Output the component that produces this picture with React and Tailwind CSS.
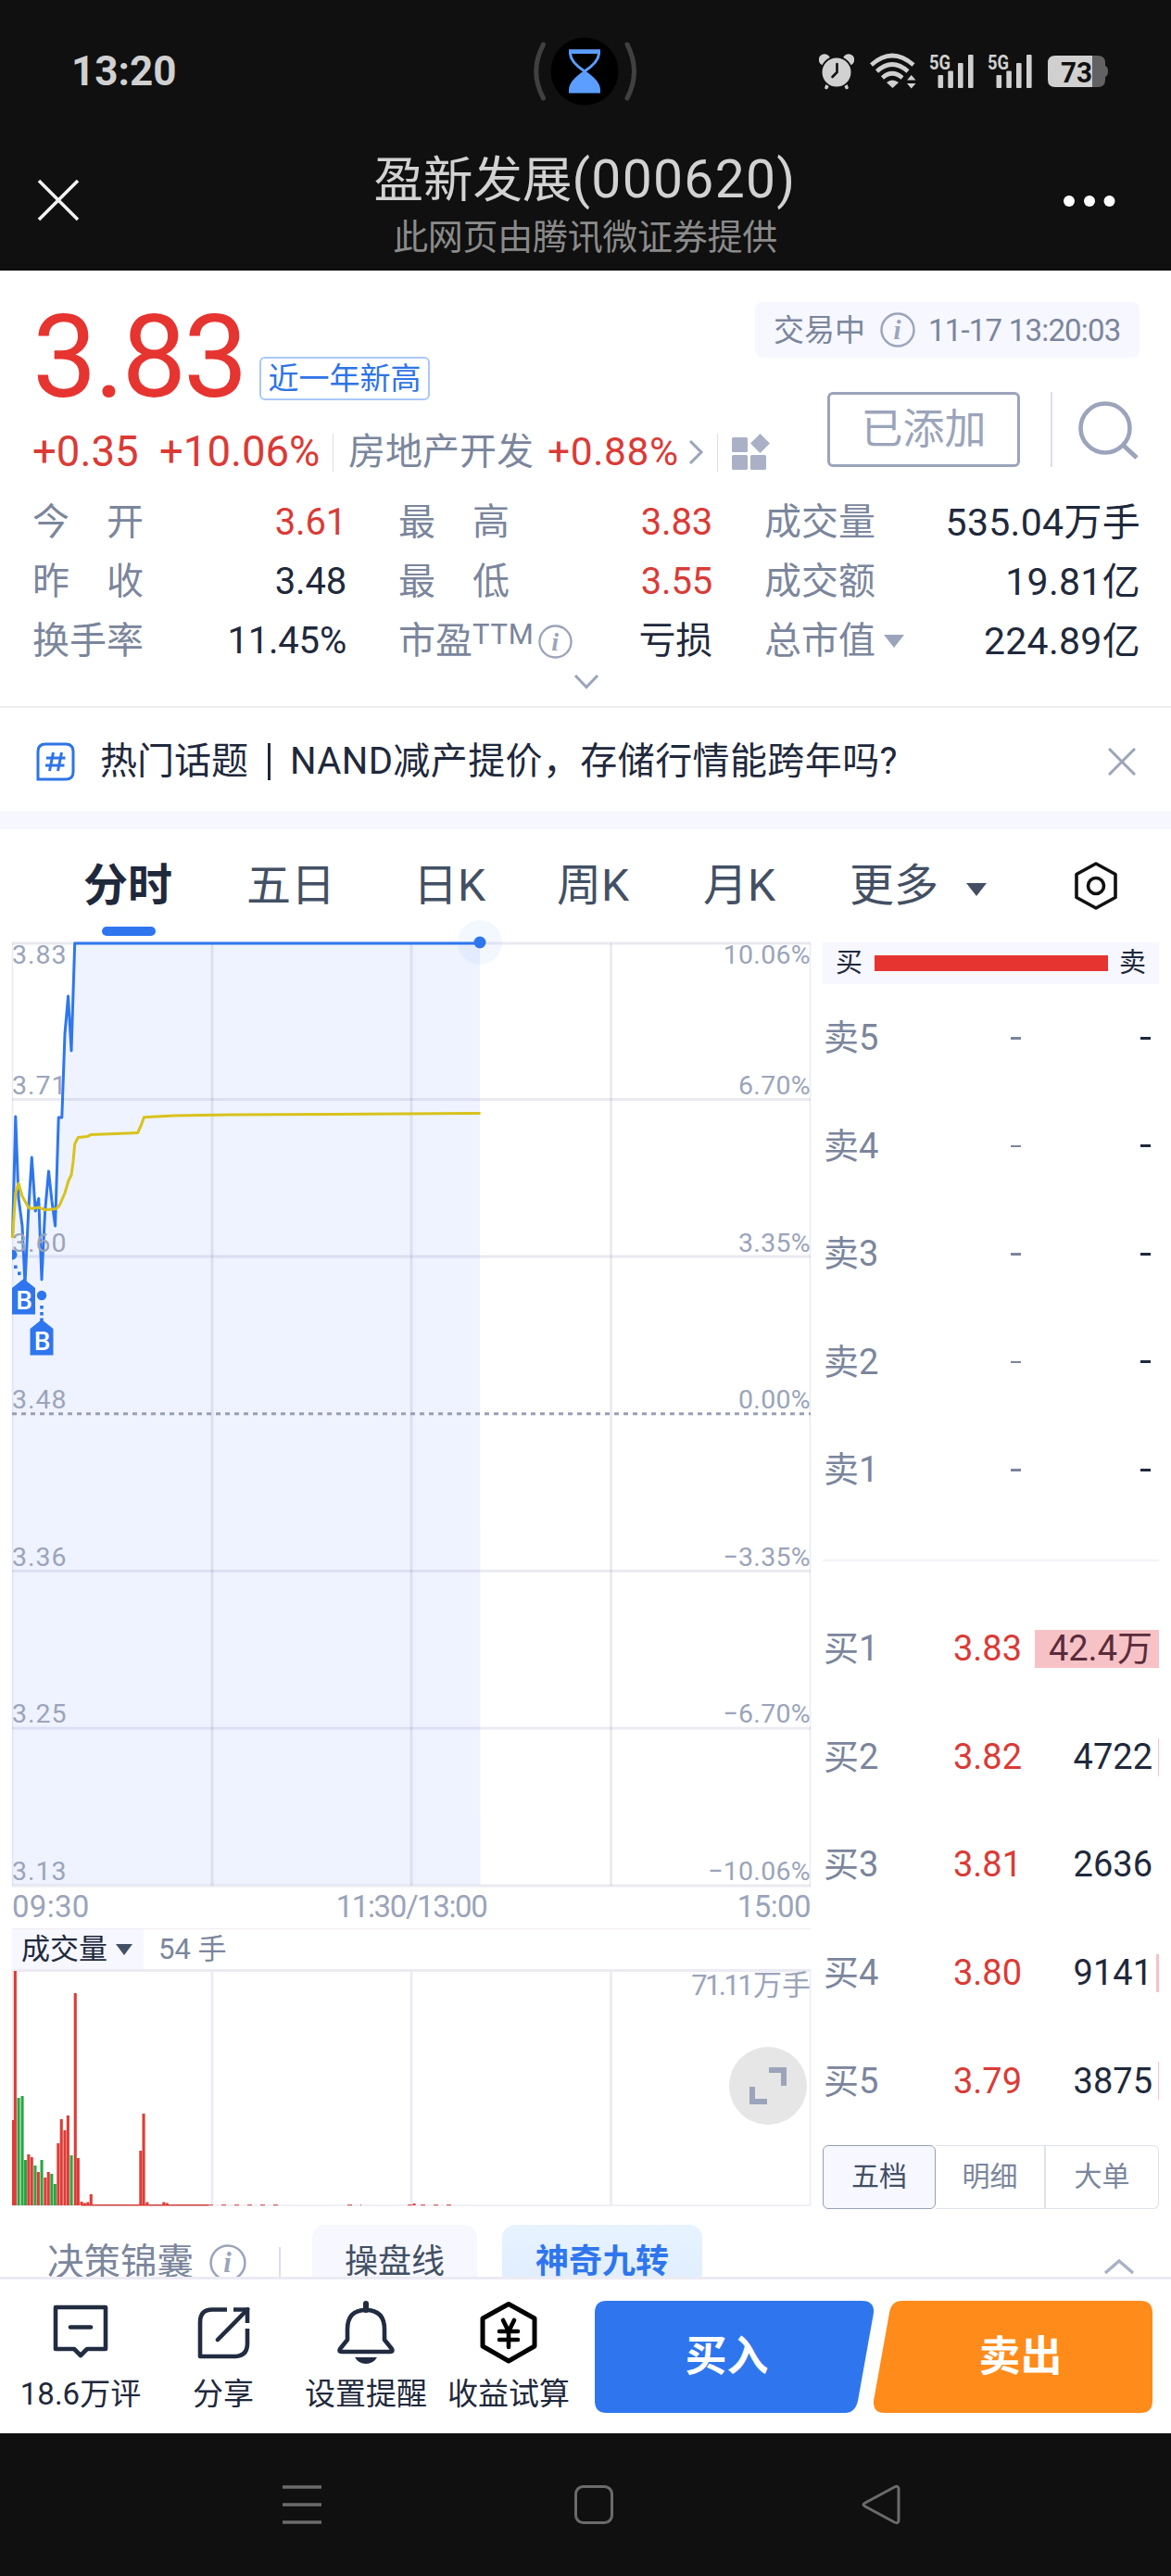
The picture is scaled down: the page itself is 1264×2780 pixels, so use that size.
// StockDetailPage
import { clsx } from 'clsx';

const STATS = [
  [
    { label: '今　开', value: '3.61', up: true },
    { label: '昨　收', value: '3.48' },
    { label: '换手率', value: '11.45%' },
  ],
  [
    { label: '最　高', value: '3.83', up: true },
    { label: '最　低', value: '3.55', up: true },
    { label: '市盈', sup: 'TTM', info: true, value: '亏损' },
  ],
  [
    { label: '成交量', value: '535.04万手' },
    { label: '成交额', value: '19.81亿' },
    { label: '总市值', arrow: true, value: '224.89亿' },
  ],
];

const STAT_COLS = ['w-[339px] tracking-[-0.2px]', 'w-[339px] tracking-[-0.2px]', 'w-[405px]'];

const SELL = ['卖5', '卖4', '卖3', '卖2', '卖1'];

const BUY = [
  { name: '买1', price: '3.83', qty: '42.4万', bar: 134 },
  { name: '买2', price: '3.82', qty: '4722', bar: 1 },
  { name: '买3', price: '3.81', qty: '2636', bar: 0 },
  { name: '买4', price: '3.80', qty: '9141', bar: 3 },
  { name: '买5', price: '3.79', qty: '3875', bar: 1 },
];

// y is the grid line, ty the text baseline
const LEVELS = [
  { y: 18, ty: 40, price: '3.83', pct: '10.06%' },
  { y: 186.5, ty: 181, price: '3.71', pct: '6.70%' },
  { y: 356, ty: 351, price: '3.60', pct: '3.35%' },
  { y: 525.7, ty: 520, price: '3.48', pct: '0.00%', base: true },
  { y: 695.4, ty: 690, price: '3.36', pct: '−3.35%' },
  { y: 865.2, ty: 859, price: '3.25', pct: '−6.70%' },
  { y: 1035, ty: 1029, price: '3.13', pct: '−10.06%' },
];

const GRID_X = [229, 444, 659.5];

const PRICE_LINE =
  '13.5,336 16.8,205 20,293 24,323 27,386 30.7,307 34.3,249 38.2,307 41.8,293.5 45,381 48.6,307 52.5,264 56,296 59.6,323 63.2,206 66.8,206 70,116 73.6,75 77,134 80.7,18 518,18';

const AVG_LINE =
  '13.5,336 16.8,287.5 20,277 24,291 30.7,303 34.3,304.3 41.8,303 48.6,305.7 60.7,304.6 64.3,300.7 70,287.5 74,274 77,268 79,253.5 80.7,234.6 84.3,227.5 94.6,226.4 98,224.6 125,223.6 148.6,222.5 152.5,214 155.4,205.7 187.5,204 250,203 357,202.5 518.6,201.4';

// [x, height, r | g]
const VOLUME = [
  [14.5, 92, 'r'], [16.3, 253, 'r'], [20, 116, 'g'], [24, 118, 'g'], [27.4, 49, 'g'],
  [30.8, 55, 'r'], [34.2, 52, 'r'], [37.9, 43, 'g'], [41.3, 36, 'r'], [45, 49, 'g'],
  [48.8, 30, 'r'], [52.2, 36, 'r'], [55.8, 34, 'g'], [59.3, 23, 'g'], [62.8, 67, 'r'],
  [66.2, 93, 'r'], [69.9, 81, 'r'], [73.3, 97, 'r'], [77, 54, 'g'], [81.2, 229, 'r'],
  [84.3, 51, 'r'], [88, 4, 'r'], [91.3, 2.5, 'r'], [94.8, 3.5, 'r'], [98.2, 12, 'r'],
  [151.8, 59, 'r'], [155, 99, 'r'], [158.8, 3.5, 'r'], [176.8, 3.5, 'r'], [180.2, 2.5, 'r'],
  [447, 2, 'r'],
];

function InfoIcon({ className }) {
  return (
    <svg viewBox="0 0 38 38" className={clsx('shrink-0', className)}>
      <circle cx="19" cy="19" r="17.5" fill="none" stroke="#9ba4ba" strokeWidth="2.4" />
      <text x="18.5" y="28.5" textAnchor="middle" fontSize="29" fontWeight="700" fontStyle="italic"
        fontFamily="Liberation Serif, serif" fill="#9ba4ba">i</text>
    </svg>
  );
}

function Signal() {
  return (
    <svg viewBox="0 0 48 40" className="h-10 w-12 overflow-visible">
      <text x="0" y="17.5" fontSize="22" fontWeight="700" textLength="23" lengthAdjust="spacingAndGlyphs"
        fontFamily="Roboto, sans-serif" fill="#d0d0d0">5G</text>
      <g fill="#d0d0d0">
        <rect x="9.5" y="24" width="5.6" height="14" rx="1" />
        <rect x="20.3" y="19.5" width="5.6" height="18.5" rx="1" />
        <rect x="31" y="11" width="5.6" height="27" rx="1" />
        <rect x="42" y="2" width="5.6" height="36" rx="1" />
      </g>
    </svg>
  );
}

function StatusBar() {
  return (
    <div className="flex h-[153px] items-center pl-[77px] pr-[68px]">
      <div className="w-[498px] text-[44px] leading-none font-bold text-[#d0d0d0]">13:20</div>
      <svg viewBox="0 0 114 76" className="h-[76px] w-[114px] shrink-0" fill="none">
        <circle cx="56" cy="38" r="36.5" fill="#000" />
        <path d="M11.5 9Q-4 38 11.5 67M102 9Q117 38 102 67" stroke="#404040" strokeWidth="5" strokeLinecap="round" />
        <path d="M40.5 16H71.5V19Q71 28 56 38Q41 28 40.5 19Z" stroke="#5c9eff" strokeWidth="3" />
        <path d="M39 14.5H73V19H39Z" fill="#5c9eff" />
        <path d="M56 37Q73 48 73 58V61.5H39V58Q39 48 56 37Z" fill="#5c9eff" />
      </svg>
      <div className="ml-auto flex items-center">
        <svg viewBox="0 0 38 40" className="mr-[17px] h-10 w-[38px]" fill="none">
          <circle cx="6" cy="7.5" r="6.2" fill="#d0d0d0" />
          <circle cx="32" cy="7.5" r="6.2" fill="#d0d0d0" />
          <path d="M10 33L8 37.5M28 33L30 37.5" stroke="#d0d0d0" strokeWidth="3.6" strokeLinecap="round" />
          <circle cx="19" cy="21" r="16.5" fill="#d0d0d0" stroke="#101010" strokeWidth="2" />
          <path d="M19.5 12V21L14.5 26" stroke="#101010" strokeWidth="2.6" strokeLinecap="round" />
        </svg>
        <svg viewBox="0 0 50 40" className="mr-[14px] h-10 w-[50px]" fill="none">
          <g stroke="#d0d0d0" strokeWidth="4.6">
            <path d="M1.5 13Q24 -7 47 13" />
            <path d="M7.5 20Q24 5 41 20" />
            <path d="M13.5 27Q24 17.5 35 27" />
          </g>
          <path d="M18 32Q24 27 31 32L24.5 38Z" fill="#d0d0d0" />
          <path d="M40 29.5L44.7 24L49.5 29.5ZM40 33L44.7 38.5L49.5 33Z" fill="#d0d0d0" />
        </svg>
        <div className="mr-[15px]"><Signal /></div>
        <div className="mr-[17px]"><Signal /></div>
        <svg viewBox="0 0 65 34" className="h-[34px] w-[65px] overflow-visible">
          <path d="M48 0H54Q62 0 62 8V11Q65 12 65 17Q65 22 62 23V26Q62 34 54 34H48Z" fill="#626262" />
          <path d="M8 0H48V34H8Q0 34 0 26V8Q0 0 8 0Z" fill="#d0d0d0" />
          <text x="14" y="28.5" fontSize="32" fontWeight="700" textLength="34" lengthAdjust="spacingAndGlyphs"
            fontFamily="Roboto, sans-serif" fill="#101010">73</text>
        </svg>
      </div>
    </div>
  );
}

function TitleBar() {
  return (
    <div className="flex h-[139px] items-start justify-between pl-10 pr-[59px]">
      <svg viewBox="0 0 46 46" className="mt-[40px] h-[46px] w-[46px]" stroke="#f2f2f2" strokeWidth="3.6">
        <path d="M2 2L44 44M44 2L2 44" />
      </svg>
      <div className="ml-[30px] flex flex-col items-center whitespace-nowrap">
        <div className="mt-[11px] text-[53.5px] leading-[60px] text-[#d2d2d2]">
          盈新发展<span className="text-[57px] tracking-[1.3px]">(000620)</span>
        </div>
        <div className="mt-[10px] text-[38px] leading-[42px] tracking-[-0.3px] text-[#8b8b8b]">此网页由腾讯微证券提供</div>
      </div>
      <svg viewBox="0 0 58 14" className="mt-[57px] h-[14px] w-[58px]" fill="#fff">
        <circle cx="7" cy="7" r="6" />
        <circle cx="29" cy="7" r="6" />
        <circle cx="50.5" cy="7" r="6" />
      </svg>
    </div>
  );
}

function Quote() {
  return (
    <div className="flex h-[224px] justify-between pl-[35px] pr-[34px]">
      <div className="w-0 whitespace-nowrap">
        <div className="flex h-[148px] w-[430px] items-end">
          <span className="-mb-[11px] w-[245px] text-[124px] leading-[130px] tracking-[-3px] text-[#e63430]">3.83</span>
          <span className="mb-2 flex h-[47px] w-[184px] items-center justify-center rounded-md border-2 border-[#aac8f6] text-[33px] leading-none text-[#2f74e6]">
            近一年新高
          </span>
        </div>
        <div className="mt-[24px] flex h-12 w-[800px] items-center leading-none">
          <span className="w-[137px] text-[45.5px] text-[#da3b36]">+0.35</span>
          <span className="w-[187px] text-[45.5px] text-[#da3b36]">+10.06%</span>
          <span className="h-[41px] w-px bg-[#dcdfe9]" />
          <span className="ml-[16px] text-[40px] text-[#7b869c]">房地产开发</span>
          <span className="ml-[15px] w-[151px] text-[42.5px] tracking-[0.6px] text-[#da3b36]">+0.88%</span>
          <svg viewBox="0 0 18 28" className="h-7 w-[18px]" fill="none" stroke="#9ba4ba" strokeWidth="3">
            <path d="M3 2L15 14L3 26" />
          </svg>
          <span className="ml-[14px] h-[41px] w-px bg-[#dcdfe9]" />
          <svg viewBox="0 0 42 40" className="ml-[15px] h-10 w-[42px]" fill="#aab1c6">
            <rect x="0" y="4" width="17" height="16" rx="1.5" />
            <rect x="0" y="23" width="17" height="16" rx="1.5" />
            <rect x="20" y="23" width="17" height="16" rx="1.5" />
            <path d="M30.5 0L41 10.5L30.5 21L20 10.5Z" />
          </svg>
        </div>
      </div>
      <div className="flex flex-col items-end">
        <div className="mt-[34px] flex h-[60px] w-[415px] items-center rounded-lg bg-[#f6f7ff] pl-5 text-[33px] leading-none text-[#7b869c]">
          交易中
          <InfoIcon className="ml-[16px] mr-[14px] h-[38px] w-[38px]" />
          <span className="tracking-[-0.8px] whitespace-nowrap">11-17 13:20:03</span>
        </div>
        <div className="mt-[37px] flex h-[81px] items-center">
          <span className="flex h-[81px] w-[208px] items-center justify-center rounded-md border-[3px] border-[#9ba4ba] text-[45px] leading-none text-[#9ba4ba]">
            已添加
          </span>
          <span className="ml-[33px] h-[81px] w-[2px] bg-[#dcdfe9]" />
          <svg viewBox="0 0 66 66" className="ml-[28px] h-[66px] w-[66px]" fill="none" stroke="#9ba4ba">
            <circle cx="29" cy="31" r="26.5" strokeWidth="4.6" />
            <path d="M49 50L63 63" strokeWidth="5" />
          </svg>
        </div>
      </div>
    </div>
  );
}

function Stats() {
  return (
    <div className="h-[246px] pl-[35px] pr-[34px] pt-[16px]">
      <div className="flex justify-between">
        {STATS.map((col, i) => (
          <div key={i} className={STAT_COLS[i]}>
            {col.map(s => (
              <div key={s.label} className="flex h-16 items-center text-[40px] leading-none">
                <span className="tracking-normal text-[#7b869c]">{s.label}</span>
                {s.sup && <span className="mb-4 text-[31px] tracking-[0.8px] text-[#7b869c]">{s.sup}</span>}
                {s.info && <InfoIcon className="ml-1 h-[37px] w-[37px]" />}
                {s.arrow && (
                  <svg viewBox="0 0 22 14" className="ml-[9px] h-[14px] w-[22px]" fill="#9ba4ba"><path d="M0 0H22L11 14Z" /></svg>
                )}
                <span className={clsx('ml-auto', s.up ? 'text-[#da3b36]' : 'text-[#1f293c]', i === 2 && '-mr-px text-[41px] tracking-[0.3px]')}>
                  {s.value}
                </span>
              </div>
            ))}
          </div>
        ))}
      </div>
      <svg viewBox="0 0 28 17" className="mx-auto mt-[3px] h-[17px] w-7" fill="none" stroke="#9ba4ba" strokeWidth="3">
        <path d="M2 2L14 14.5L26 2" />
      </svg>
    </div>
  );
}

function News() {
  return (
    <div className="flex h-[113px] items-center border-t-2 border-[#eeeef3] pt-1 pl-[39px] pr-[38px] text-[40px] leading-none text-[#1f293c]">
      <svg viewBox="0 0 42 42" className="mr-[27px] h-[42px] w-[42px]" fill="none" stroke="#2f74e6" strokeWidth="3">
        <path d="M10 2H32Q40 2 40 10V32Q40 40 32 40H2V10Q2 2 10 2Z" />
        <path d="M18.5 11L14.5 31M27.5 11L23.5 31M11 17H31.5M10 25H30.5" />
      </svg>
      <span className="mr-[21px]">热门话题</span>
      <span className="mr-[21px] h-[40px] w-[3px] bg-[#1f293c]" />
      <span className="tracking-[0.4px]">NAND减产提价，存储行情能跨年吗?</span>
      <svg viewBox="0 0 30 30" className="ml-auto h-[30px] w-[30px]" stroke="#9ba4ba" strokeWidth="3"><path d="M1 1L29 29M29 1L1 29" /></svg>
    </div>
  );
}

function Tabs() {
  return (
    <div className="flex h-[105px] items-start pt-[31px] text-[48px] leading-[60px] text-[#435064]">
      <div className="ml-[90px] flex w-[176px] flex-col font-bold text-[#1f293c]">
        分时
        <span className="ml-5 mt-[14px] h-[10px] w-[58px] rounded-full bg-[#2f76ee]" />
      </div>
      <span className="w-[180px]">五日</span>
      <span className="w-[155px]">日K</span>
      <span className="w-[158px]">周K</span>
      <span className="w-[158px]">月K</span>
      <span className="w-[126px]">更多</span>
      <svg viewBox="0 0 22 14" className="mt-[27px] h-[14px] w-[22px]" fill="#435064"><path d="M0 0H22L11 14Z" /></svg>
      <svg viewBox="0 0 48 52" className="ml-[94px] mt-[4px] h-[52px] w-12" fill="none" stroke="#111" strokeWidth="3.6" strokeLinejoin="round">
        <path d="M24 2L45 13.5V38.5L24 50L3 38.5V13.5Z" />
        <circle cx="24" cy="26" r="8.5" />
      </svg>
    </div>
  );
}

function BuyMark({ x, y }) {
  return (
    <g>
      <path d={`M${x} ${y}L${x + 12.5} ${y + 10}V${y + 38.5}H${x - 12.5}V${y + 10}Z`} fill="#2f76ee" />
      <text x={x + 0.5} y={y + 33} textAnchor="middle" fontSize="28" fontWeight="500"
        fontFamily="Roboto, sans-serif" fill="#fff">B</text>
    </g>
  );
}

function PriceChart() {
  return (
    <svg viewBox="0 -10 880 1048" className="-mt-[10px] block h-[1048px] w-[880px]" fill="none">
      <polygon points={`${PRICE_LINE} 518.5,1034 13.5,1034`} fill="#eef3ff" />
      <g stroke="#3c3c82" strokeOpacity=".11" strokeWidth="2.8">
        {LEVELS.filter(l => !l.base).map(l => <path key={l.y} d={`M13 ${l.y}H875`} />)}
        {GRID_X.map(x => <path key={x} d={`M${x} 18V1035`} />)}
        <path d="M13.5 18V1035M874.5 18V1035" strokeWidth="1.6" />
      </g>
      <path d="M13 525.7H875" stroke="#97a0b6" strokeWidth="3" strokeDasharray="5 5" />
      <polyline points={PRICE_LINE} stroke="#2f76ee" strokeWidth="3" strokeLinejoin="round" />
      <circle cx="518" cy="17" r="24" fill="#2f86ff" fillOpacity=".06" />
      <circle cx="518" cy="17" r="6.5" fill="#2f76ee" />
      <g fontFamily="Roboto, sans-serif" fontSize="28.5" fill="#9ba4ba">
        {LEVELS.map(l => (
          <g key={l.y}>
            <text x="13" y={l.ty} letterSpacing="1">{l.price}</text>
            <text x="875" y={l.ty} textAnchor="end" letterSpacing=".3">{l.pct}</text>
          </g>
        ))}
      </g>
      <polyline points={AVG_LINE} stroke="#d8c21c" strokeWidth="3" strokeLinejoin="round" />
      <path d="M13 348.5A5.5 5.5 0 0 1 13 359.5Z" fill="#2f76ee" />
      <circle cx="45" cy="398" r="5.2" fill="#2f76ee" />
      <g fill="#2f76ee">
        <rect x="15" y="365.5" width="3.6" height="3.6" />
        <rect x="19" y="372.5" width="3.6" height="3.6" />
        <rect x="43.2" y="409" width="3.6" height="3.6" />
        <rect x="43.2" y="416" width="3.6" height="3.6" />
        <rect x="43.2" y="422.5" width="3.6" height="3.6" />
      </g>
      <BuyMark x={25.5} y={380} />
      <BuyMark x={45} y={424} />
    </svg>
  );
}

function VolumeChart() {
  return (
    <div className="relative">
      <svg viewBox="0 0 880 258" className="block h-[258px] w-[880px]" fill="none">
        <g stroke="#ecebf4" strokeWidth="2.8">
          <path d="M13 1.5H875" />
          {GRID_X.map(x => <path key={x} d={`M${x} 1V255`} />)}
          <path d="M13.5 1V255H874.5V1" strokeWidth="1.6" />
        </g>
        <path d="M88 254.7H225" stroke="#d0403c" strokeWidth="1.4" />
        <path d="M225 254.7H300M375 254.7H390M440 254.7H495" stroke="#d0403c" strokeDasharray="5 9" />
        {VOLUME.map(([x, h, c]) => (
          <rect key={x} x={x - 1.5} y={255 - h} width="3.1" height={h} fill={c === 'r' ? '#de3c37' : '#2ba544'} />
        ))}
      </svg>
      <span className="absolute top-[2px] right-[5px] text-[31px] leading-[32px] whitespace-nowrap text-[#9ba4ba]">
        <span className="tracking-[-2.6px]">71.11</span><span className="ml-[2px]">万手</span>
      </span>
      <div className="absolute top-[84px] right-[9px] flex h-[84px] w-[84px] items-center justify-center rounded-full bg-[#e6e6e6]">
        <svg viewBox="0 0 40 42" className="h-[42px] w-10" fill="none" stroke="#9ba4ba" strokeWidth="6">
          <path d="M21 4H37V21M3 22V38H19" />
        </svg>
      </div>
    </div>
  );
}

function ChartPanel() {
  return (
    <div className="w-[880px] shrink-0">
      <PriceChart />
      <div className="flex h-[43px] w-[875px] items-center justify-between pb-[4px] pl-[13px] text-[33px] leading-none text-[#9ba4ba]">
        <span className="w-[120px] tracking-[0.3px]">09:30</span>
        <span className="tracking-[-1.4px]">11:30/13:00</span>
        <span className="w-[120px] text-right tracking-[-0.6px]">15:00</span>
      </div>
      <div className="ml-[13px] flex h-[44px] w-[862px] items-center border-t border-[#f1ecf1] text-[31px] leading-none">
        <div className="flex h-full w-[142px] items-center bg-[#f6f7ff] pl-[10px] text-[#1f293c]">
          成交量
          <svg viewBox="0 0 18 12" className="ml-[9px] h-3 w-[18px]" fill="#435064"><path d="M0 0H18L9 12Z" /></svg>
        </div>
        <span className="ml-4 text-[#7b869c]">54 手</span>
      </div>
      <VolumeChart />
    </div>
  );
}

function OrderBook() {
  return (
    <div className="ml-2 w-[363px] shrink-0 pt-[17px] text-[38px] leading-none">
      <div className="flex h-[45px] items-center justify-between bg-[#f6f7ff] px-[14px] text-[29px] text-[#1f293c]">
        买
        <span className="h-[17px] w-[252px] bg-[#e63430]" />
        卖
      </div>
      <div className="h-[623px] border-b-2 border-[#f3f3f9]">
        {SELL.map(name => (
          <div key={name} className="flex h-[116.5px] items-center">
            <span className="pl-px text-[#7b869c]">{name}</span>
            <span className="ml-auto h-[2.5px] w-[11px] bg-[#7b869c]" />
            <span className="ml-[129px] mr-[9px] h-[3px] w-[11px] bg-[#1f293c]" />
          </div>
        ))}
      </div>
      <div className="pt-[36px]">
        {BUY.map(b => (
          <div key={b.name} className="relative flex h-[116.6px] items-center">
            <span className="w-[100px] pl-px text-[#7b869c]">{b.name}</span>
            <span className="w-[115px] text-right text-[#da3b36]">{b.price}</span>
            <span className="w-[141px] text-right text-[#1f293c]">{b.qty}</span>
            <span className="absolute top-[38px] right-0 h-[41px] bg-[#e2343f]/30" style={{ width: b.bar }} />
          </div>
        ))}
      </div>
      <div className="mt-[11px] flex h-[69px] text-[30px] text-[#7b869c]">
        <span className="flex w-[122px] items-center justify-center rounded-md border-[1.5px] border-[#97a0b6] bg-[#f6f7ff] text-[#435064]">五档</span>
        <span className="flex w-[119px] items-center justify-center border-y border-r-2 border-[#dfe1ea]">明细</span>
        <span className="flex w-[122px] items-center justify-center rounded-r-md border border-l-0 border-[#dfe1ea]">大单</span>
      </div>
    </div>
  );
}

function ToolStrip() {
  return (
    <div className="flex h-[73px] items-start overflow-hidden pt-[17px] leading-none">
      <span className="ml-[51px] mt-[21px] text-[39.5px] text-[#7b869c]">决策锦囊</span>
      <InfoIcon className="ml-[17px] mt-[21px] h-10 w-10" />
      <span className="ml-[35px] mt-[24px] h-10 w-[2px] bg-[#dcdfe9]" />
      <span className="ml-[34px] flex h-[80px] w-[178px] items-center justify-center rounded-[14px] bg-[#f6f7ff] text-[36px] text-[#435064]">操盘线</span>
      <span className="ml-[27px] flex h-[80px] w-[216px] items-center justify-center rounded-[14px] bg-linear-to-b from-[#e7f3ff] to-[#dfecff] text-[36px] font-bold text-[#2f76ee]">神奇九转</span>
      <svg viewBox="0 0 34 18" className="ml-auto mr-[39px] mt-[36px] h-[18px] w-[34px]" fill="none" stroke="#aab1c6" strokeWidth="3.4">
        <path d="M2 16L17 3L32 16" />
      </svg>
    </div>
  );
}

function ActionIcon({ name }) {
  if (name === 'comment') {
    return (
      <svg viewBox="0 0 68 70" className="h-[70px] w-[68px]" fill="none" stroke="#212c40" strokeWidth="4.6" strokeLinejoin="round">
        <path d="M7 8H61V53H41L34 60L27 53H7Z" />
        <path d="M23 29.5H45" strokeLinecap="round" />
      </svg>
    );
  }
  if (name === 'share') {
    return (
      <svg viewBox="0 0 68 70" className="h-[70px] w-[68px]" fill="none" stroke="#212c40" strokeWidth="4.6">
        <path d="M38 10.5H22Q9 10.5 9 24V61H46Q60 61 60 47V31" strokeLinejoin="round" />
        <path d="M45 10.5H60V25" />
        <path d="M60 10.5L28 43" strokeLinecap="round" />
      </svg>
    );
  }
  if (name === 'bell') {
    return (
      <svg viewBox="0 0 68 70" className="h-[70px] w-[68px]" fill="none" stroke="#212c40" strokeWidth="4.6" strokeLinejoin="round">
        <path d="M34 4V11" strokeLinecap="round" strokeWidth="6" />
        <path d="M34 11Q54 11 54 32V43L62 53Q64 56 60 56H8Q4 56 6 53L14 43V32Q14 11 34 11Z" />
        <path d="M22 62H46Q42 69 34 69Q26 69 22 62Z" fill="#212c40" stroke="none" />
      </svg>
    );
  }
  return (
    <svg viewBox="0 0 68 70" className="h-[70px] w-[68px]" fill="none" stroke="#000" strokeWidth="5" strokeLinejoin="round" strokeLinecap="round">
      <path d="M34 4.5L62 20V50L34 66L6 50V20Z" />
      <path d="M28 22L34 34L40 22M24 34H44M24 43H44M34 34V51" strokeWidth="4.6" />
    </svg>
  );
}

const ACTIONS = [
  { icon: 'comment', label: '18.6万评' },
  { icon: 'share', label: '分享' },
  { icon: 'bell', label: '设置提醒' },
  { icon: 'calc', label: '收益试算' },
];

function ActionBar() {
  return (
    <div className="flex h-[169px] border-t-[3px] border-[#ecebf5] pl-[10px]">
      {ACTIONS.map(a => (
        <div key={a.icon} className="flex w-[154px] flex-col items-center pt-[22px]">
          <ActionIcon name={a.icon} />
          <span className="mt-[12px] text-[33px] leading-[40px] whitespace-nowrap text-[#1f293c]">{a.label}</span>
        </div>
      ))}
      <div className="ml-4 mt-[23px] grid h-[121px] w-[602px] grid-cols-2 text-[45px] leading-none font-bold text-white">
        <div className="relative flex items-center justify-center pr-[16px]">
          <svg viewBox="0 0 301 121" className="absolute inset-0 h-[121px] w-[301px]">
            <path d="M13 0H288Q302 0 301 13L284 108Q281 121 270 121H13Q0 121 0 108V13Q0 0 13 0Z" fill="#2f76ee" />
          </svg>
          <span className="relative">买入</span>
        </div>
        <div className="relative flex items-center justify-center pl-[16px]">
          <svg viewBox="0 0 301 121" className="absolute inset-0 h-[121px] w-[301px]">
            <path d="M31 0H288Q301 0 301 13V108Q301 121 288 121H12Q-1 121 0 108L17 13Q19 0 31 0Z" fill="#ff8b1a" />
          </svg>
          <span className="relative">卖出</span>
        </div>
      </div>
    </div>
  );
}

function SystemNav() {
  return (
    <div className="flex h-[154px] items-center justify-between bg-[#101010] pl-[304px] pr-[291px]">
      <svg viewBox="0 0 44 44" className="h-11 w-11" stroke="#6b6b6b" strokeWidth="3.6">
        <path d="M1 3H43M1 22H43M1 41H43" />
      </svg>
      <svg viewBox="0 0 44 44" className="ml-[5px] h-11 w-11" fill="none" stroke="#6b6b6b" strokeWidth="3">
        <rect x="2.5" y="2.5" width="39" height="39" rx="8" />
      </svg>
      <svg viewBox="0 0 44 44" className="h-11 w-11" fill="none" stroke="#6b6b6b" strokeWidth="3" strokeLinejoin="round">
        <path d="M36.5 3Q41 1 41 5V39Q41 43 36.5 41L5 24Q1 22 5 20Z" />
      </svg>
    </div>
  );
}

export default function App() {
  return (
    <div className="h-[2780px] w-[1264px] overflow-hidden bg-white font-[Roboto,'Noto_Sans_CJK_SC',sans-serif]">
      <div className="h-[292px] bg-[#101010]">
        <StatusBar />
        <TitleBar />
      </div>
      <Quote />
      <Stats />
      <News />
      <div className="h-5 bg-[#f6f7ff]" />
      <Tabs />
      <div className="flex h-[1384px]">
        <ChartPanel />
        <OrderBook />
      </div>
      <ToolStrip />
      <ActionBar />
      <SystemNav />
    </div>
  );
}
